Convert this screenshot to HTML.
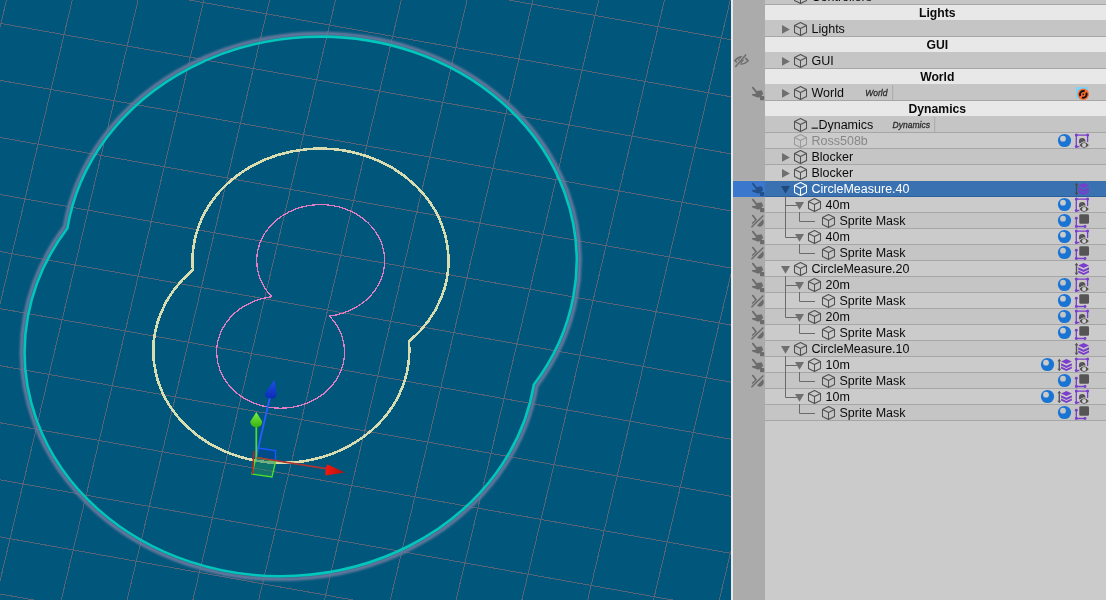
<!DOCTYPE html>
<html><head><meta charset="utf-8"><style>
html,body{margin:0;padding:0;width:1106px;height:600px;overflow:hidden;background:#c8c8c8}
svg{position:absolute;left:0;top:0;display:block}
</style></head><body>
<svg width="1106" height="600" viewBox="0 0 1106 600">
<rect x="0" y="0" width="731" height="600" fill="#00567b"/>
<path d="M0 -205.03L731 -74.40M0 -147.96L731 -17.33M0 -90.89L731 39.74M0 -33.82L731 96.81M0 23.25L731 153.88M0 80.32L731 210.95M0 137.39L731 268.02M0 194.46L731 325.09M0 251.53L731 382.16M0 308.60L731 439.23M0 365.67L731 496.30M0 422.74L731 553.37M0 479.81L731 610.44M0 536.88L731 667.51M0 593.95L731 724.58M0 651.02L731 781.65M-190.90 0L-333.52 600M-125.10 0L-267.72 600M-59.30 0L-201.92 600M6.50 0L-136.12 600M72.30 0L-70.32 600M138.10 0L-4.52 600M203.90 0L61.28 600M269.70 0L127.08 600M335.50 0L192.88 600M401.30 0L258.68 600M467.10 0L324.48 600M532.90 0L390.28 600M598.70 0L456.08 600M664.50 0L521.88 600M730.30 0L587.68 600M796.10 0L653.48 600M861.90 0L719.28 600M927.70 0L785.08 600M993.50 0L850.88 600" stroke="#576377" stroke-width="1" fill="none" shape-rendering="crispEdges"/>
<defs><filter id="blur1" x="-10%" y="-10%" width="120%" height="120%"><feGaussianBlur stdDeviation="0.9"/></filter></defs>
<path d="M64.55 227.00A259.0 227.0 0 1 1 536.75 385.80A259.0 227.0 0 1 1 64.55 227.00Z" fill="none" stroke="#66789c" stroke-width="3.8" filter="url(#blur1)"/>
<path d="M67.39 228.22A256 224 0 1 1 533.91 384.58A256 224 0 1 1 67.39 228.22Z" fill="none" stroke="#00c6bc" stroke-width="2.6"/>
<path d="M192.94 269.87A128 112 0 1 1 408.86 341.63A128 112 0 1 1 192.94 269.87Z" fill="none" stroke="#d8dcae" stroke-width="2.6" shape-rendering="crispEdges"/>
<path d="M271.80 296.73A64 56 0 1 1 329.50 316.07A64 56 0 1 1 271.80 296.73Z" fill="none" stroke="#e47cc2" stroke-width="1.3" shape-rendering="crispEdges"/>
<path d="M256.5 458L257.5 448L275.5 450.5L275.5 460.5Z" fill="#004a8c" opacity="0.9"/>
<path d="M257.5 448L275.5 450.5L275.5 460.5" fill="none" stroke="#1a5aff" stroke-width="1.3"/>
<path d="M256 457.5L275.7 461L272 477L252 474Z" fill="#1f8a60" opacity="0.55"/>
<path d="M256 457.5L275.7 461L272 477L252 474Z" fill="none" stroke="#4ee02a" stroke-width="1.3"/>
<path d="M254 451L252.5 474" stroke="#c02020" stroke-width="1.5"/>
<path d="M256 457.5L326 468.6" stroke="#b03434" stroke-width="1.7"/>
<path d="M256 457.5L270.5 395" stroke="#2a5cff" stroke-width="1.8"/>
<path d="M256.3 457.5L256.3 426" stroke="#48dc40" stroke-width="1.8"/>
<defs><linearGradient id="gcone" x1="0" y1="0" x2="0" y2="1"><stop offset="0" stop-color="#7cf040"/><stop offset="1" stop-color="#38b010"/></linearGradient><linearGradient id="bcone" x1="0" y1="0" x2="0" y2="1"><stop offset="0" stop-color="#2050f0"/><stop offset="1" stop-color="#0a2cb0"/></linearGradient><linearGradient id="rcone" x1="0" y1="0" x2="1" y2="0"><stop offset="0" stop-color="#f01a10"/><stop offset="1" stop-color="#b01010"/></linearGradient></defs>
<path d="M256.3 412L262.2 421.5Q262 427 256.3 427.2Q250.5 427 250.3 421.5Z" fill="url(#gcone)"/>
<path d="M274.4 379.8L276.8 395Q275 399 271 398.6Q265 398 264.5 394.5Z" fill="url(#bcone)"/>
<path d="M344.8 472.4L327.3 464.3Q324.5 469 325.6 475.4Z" fill="url(#rcone)"/>
<rect x="731" y="0" width="2" height="600" fill="#e9e9e9" />
<rect x="733" y="0" width="32" height="600" fill="#ababab" />
<rect x="765" y="0" width="341" height="600" fill="#cbcbcb" />
<rect x="765" y="-12" width="341" height="16" fill="#c5c5c5" />
<path d="M800.5 -9.5L806.5 -6.5L806.5 0.5L800.5 3.5L794.5 0.5L794.5 -6.5ZM794.5 -6.5L800.5 -3.5L806.5 -6.5M800.5 -3.5L800.5 3.5" fill="none" stroke="#505050" stroke-width="1.05" stroke-linejoin="round"/>
<rect x="765" y="4" width="341" height="1" fill="#a6a6a6" />
<rect x="765" y="5" width="341" height="15" fill="#e8e8e8" />
<rect x="765" y="20" width="341" height="16" fill="#c5c5c5" />
<path d="M782 25L789.9 29.4L782 33.8Z" fill="#6f6f6f"/>
<path d="M800.5 22.5L806.5 25.5L806.5 32.5L800.5 35.5L794.5 32.5L794.5 25.5ZM794.5 25.5L800.5 28.5L806.5 25.5M800.5 28.5L800.5 35.5" fill="none" stroke="#505050" stroke-width="1.05" stroke-linejoin="round"/>
<rect x="765" y="36" width="341" height="1" fill="#a6a6a6" />
<rect x="765" y="37" width="341" height="15" fill="#e8e8e8" />
<rect x="765" y="52" width="341" height="16" fill="#c5c5c5" />
<path d="M782 57L789.9 61.4L782 65.8Z" fill="#6f6f6f"/>
<path d="M800.5 54.5L806.5 57.5L806.5 64.5L800.5 67.5L794.5 64.5L794.5 57.5ZM794.5 57.5L800.5 60.5L806.5 57.5M800.5 60.5L800.5 67.5" fill="none" stroke="#505050" stroke-width="1.05" stroke-linejoin="round"/>
<path d="M734.8 60.7Q741.5 53.0 748.2 60.7Q741.5 67.4 734.8 60.7Z" fill="none" stroke="#6e6e6e" stroke-width="1.5"/>
<path d="M737.7 60.7Q739.5 56.2 744.1 57.6L739.1 64.0Q737.7 62.7 737.7 60.7Z" fill="#6e6e6e"/>
<path d="M735.7 66.4L745.7 54.900000000000006" stroke="#ababab" stroke-width="3.2"/>
<path d="M735.7 66.4L745.7 54.900000000000006" stroke="#6e6e6e" stroke-width="1.5" stroke-linecap="round"/>
<path d="M741.0 62.400000000000006L743.1 60.2" stroke="#6e6e6e" stroke-width="1.3" stroke-linecap="round"/>
<rect x="765" y="68" width="341" height="1" fill="#a6a6a6" />
<rect x="765" y="69" width="341" height="15" fill="#e8e8e8" />
<rect x="765" y="84" width="341" height="16" fill="#c5c5c5" />
<path d="M782 89L789.9 93.4L782 97.8Z" fill="#6f6f6f"/>
<path d="M800.5 86.5L806.5 89.5L806.5 96.5L800.5 99.5L794.5 96.5L794.5 89.5ZM794.5 89.5L800.5 92.5L806.5 89.5M800.5 92.5L800.5 99.5" fill="none" stroke="#505050" stroke-width="1.05" stroke-linejoin="round"/>
<rect x="892.2" y="85" width="1" height="15" fill="#aaaaaa"/>
<rect x="1076" y="87" width="12" height="11.5" fill="#7dd3f7" rx="1"/>
<circle cx="1083.3" cy="94.3" r="5.7" fill="#ff6b2c"/>
<path d="M1080.44 95.95A3.3 3.3 0 0 1 1084.69 91.31" stroke="#141414" stroke-width="1.9" fill="none"/>
<path d="M1086.16 92.65A3.3 3.3 0 0 1 1081.91 97.29" stroke="#141414" stroke-width="1.9" fill="none"/>
<circle cx="1083.3" cy="94.3" r="0.9" fill="#3a1a0a"/>
<path d="M752.8 87.6L756.6 92.4" stroke="#6b6b6b" stroke-width="1.7" stroke-linecap="round"/>
<path d="M755.4 91.2L761.6 90.2L763.2 93.6L761 96.4L758.4 97.8L752.2 95.4L752.2 94L756 93.8Z" fill="#6b6b6b"/>
<rect x="760" y="96" width="4.2" height="4.2" rx="0.8" fill="#6b6b6b"/>
<rect x="765" y="100" width="341" height="1" fill="#a6a6a6" />
<rect x="765" y="101" width="341" height="15" fill="#e8e8e8" />
<rect x="765" y="116" width="341" height="16" fill="#c5c5c5" />
<path d="M800.5 118.5L806.5 121.5L806.5 128.5L800.5 131.5L794.5 128.5L794.5 121.5ZM794.5 121.5L800.5 124.5L806.5 121.5M800.5 124.5L800.5 131.5" fill="none" stroke="#505050" stroke-width="1.05" stroke-linejoin="round"/>
<rect x="811.6" y="127.6" width="6.4" height="1.1" fill="#0b0b0b" />
<rect x="934.2" y="117" width="1" height="15" fill="#aaaaaa"/>
<rect x="765" y="132" width="341" height="16" fill="#cbcbcb" />
<rect x="765" y="132" width="341" height="1" fill="#a6a6a6" />
<path d="M800.5 134.5L806.5 137.5L806.5 144.5L800.5 147.5L794.5 144.5L794.5 137.5ZM794.5 137.5L800.5 140.5L806.5 137.5M800.5 140.5L800.5 147.5" fill="none" stroke="#9a9a9a" stroke-width="1.05" stroke-linejoin="round"/>
<circle cx="1064.5" cy="140.5" r="6.6" fill="#1a74d4"/><circle cx="1063.0" cy="138.7" r="2.9" fill="#cbcbcb"/>
<path d="M1076.3 146.6L1076.3 135.1L1087.6 135.1L1087.6 142M1076.3 146.6L1079.5 146.6" stroke="#7a3dcc" stroke-width="1.3" fill="none"/>
<circle cx="1076.3" cy="135.1" r="1.5" fill="#7a3dcc"/>
<circle cx="1087.6" cy="135.1" r="1.5" fill="#7a3dcc"/>
<circle cx="1076.3" cy="146.6" r="1.5" fill="#7a3dcc"/>
<path d="M1079.0 143.3L1079.0 141.3A3.2 3.2 0 0 1 1085.4 141.3L1085.4 143.3Z" fill="#555555"/>
<path d="M1078.8 145.1Q1084.1 138.5 1089.3999999999999 145.1Q1084.1 151.7 1078.8 145.1Z" fill="#555555" stroke="#cbcbcb" stroke-width="0.9"/>
<circle cx="1084.1" cy="145.1" r="2.1" fill="#cdcdcd"/>
<rect x="765" y="148" width="341" height="16" fill="#c5c5c5" />
<rect x="765" y="148" width="341" height="1" fill="#a6a6a6" />
<path d="M782 153L789.9 157.4L782 161.8Z" fill="#6f6f6f"/>
<path d="M800.5 150.5L806.5 153.5L806.5 160.5L800.5 163.5L794.5 160.5L794.5 153.5ZM794.5 153.5L800.5 156.5L806.5 153.5M800.5 156.5L800.5 163.5" fill="none" stroke="#505050" stroke-width="1.05" stroke-linejoin="round"/>
<rect x="765" y="164" width="341" height="16" fill="#cbcbcb" />
<rect x="765" y="164" width="341" height="1" fill="#a6a6a6" />
<path d="M782 169L789.9 173.4L782 177.8Z" fill="#6f6f6f"/>
<path d="M800.5 166.5L806.5 169.5L806.5 176.5L800.5 179.5L794.5 176.5L794.5 169.5ZM794.5 169.5L800.5 172.5L806.5 169.5M800.5 172.5L800.5 179.5" fill="none" stroke="#505050" stroke-width="1.05" stroke-linejoin="round"/>
<rect x="765" y="180" width="341" height="16" fill="#c5c5c5" />
<rect x="765" y="180" width="341" height="1" fill="#a6a6a6" />
<rect x="765" y="180" width="341" height="1" fill="#cfcabf" />
<rect x="733" y="180" width="32" height="1" fill="#b5b1a8" />
<rect x="765" y="181" width="341" height="16" fill="#3a72b1" />
<rect x="733" y="181" width="32" height="16" fill="#3b77cc" />
<rect x="765" y="196" width="341" height="1" fill="#2d5f9a" />
<path d="M781.0 186L790.0 186L785.5 193.8Z" fill="#1f4a7d"/>
<path d="M800.5 182.5L806.5 185.5L806.5 192.5L800.5 195.5L794.5 192.5L794.5 185.5ZM794.5 185.5L800.5 188.5L806.5 185.5M800.5 188.5L800.5 195.5" fill="none" stroke="#ffffff" stroke-width="1.05" stroke-linejoin="round"/>
<path d="M1076.5 184L1076.5 194" stroke="#4a4a4a" stroke-width="1.4"/>
<path d="M1074.6 185.2L1076.5 182.8L1078.4 185.2ZM1074.6 192.8L1076.5 195.2L1078.4 192.8Z" fill="#4a4a4a"/>
<path d="M1078.2 185.5L1083.6 182.9L1089.0 185.5L1083.6 188.1Z" fill="#7a3dcc"/>
<path d="M1078.2 187.3L1083.6 189.8L1089.0 187.3L1089.0 189.4L1083.6 191.9L1078.2 189.4Z" fill="#7a3dcc"/>
<path d="M1078.2 190.5L1083.6 193L1089.0 190.5L1089.0 192.6L1083.6 195.1L1078.2 192.6Z" fill="#7a3dcc"/>
<path d="M752.8 183.6L756.6 188.4" stroke="#23508a" stroke-width="1.7" stroke-linecap="round"/>
<path d="M755.4 187.2L761.6 186.2L763.2 189.6L761 192.4L758.4 193.8L752.2 191.4L752.2 190L756 189.8Z" fill="#23508a"/>
<rect x="760" y="192" width="4.2" height="4.2" rx="0.8" fill="#23508a"/>
<rect x="765" y="197" width="341" height="15" fill="#cbcbcb" />
<path d="M795.0 202L804.0 202L799.5 209.8Z" fill="#6f6f6f"/>
<path d="M814.5 198.5L820.5 201.5L820.5 208.5L814.5 211.5L808.5 208.5L808.5 201.5ZM808.5 201.5L814.5 204.5L820.5 201.5M814.5 204.5L814.5 211.5" fill="none" stroke="#505050" stroke-width="1.05" stroke-linejoin="round"/>
<circle cx="1064.5" cy="204.5" r="6.6" fill="#1a74d4"/><circle cx="1063.0" cy="202.7" r="2.9" fill="#cbcbcb"/>
<path d="M1076.3 210.6L1076.3 199.1L1087.6 199.1L1087.6 206M1076.3 210.6L1079.5 210.6" stroke="#7a3dcc" stroke-width="1.3" fill="none"/>
<circle cx="1076.3" cy="199.1" r="1.5" fill="#7a3dcc"/>
<circle cx="1087.6" cy="199.1" r="1.5" fill="#7a3dcc"/>
<circle cx="1076.3" cy="210.6" r="1.5" fill="#7a3dcc"/>
<path d="M1079.0 207.3L1079.0 205.3A3.2 3.2 0 0 1 1085.4 205.3L1085.4 207.3Z" fill="#555555"/>
<path d="M1078.8 209.1Q1084.1 202.5 1089.3999999999999 209.1Q1084.1 215.7 1078.8 209.1Z" fill="#555555" stroke="#cbcbcb" stroke-width="0.9"/>
<circle cx="1084.1" cy="209.1" r="2.1" fill="#cdcdcd"/>
<path d="M752.8 199.6L756.6 204.4" stroke="#6b6b6b" stroke-width="1.7" stroke-linecap="round"/>
<path d="M755.4 203.2L761.6 202.2L763.2 205.6L761 208.4L758.4 209.8L752.2 207.4L752.2 206L756 205.8Z" fill="#6b6b6b"/>
<rect x="760" y="208" width="4.2" height="4.2" rx="0.8" fill="#6b6b6b"/>
<rect x="765" y="212" width="341" height="16" fill="#c5c5c5" />
<rect x="765" y="212" width="341" height="1" fill="#a6a6a6" />
<path d="M828.5 214.5L834.5 217.5L834.5 224.5L828.5 227.5L822.5 224.5L822.5 217.5ZM822.5 217.5L828.5 220.5L834.5 217.5M828.5 220.5L828.5 227.5" fill="none" stroke="#505050" stroke-width="1.05" stroke-linejoin="round"/>
<circle cx="1064.5" cy="220.5" r="6.6" fill="#1a74d4"/><circle cx="1063.0" cy="218.7" r="2.9" fill="#c5c5c5"/>
<path d="M1076.3 218.3L1076.3 226.5L1085.0 226.5" stroke="#7a3dcc" stroke-width="1.3" fill="none"/>
<circle cx="1076.3" cy="218.3" r="1.45" fill="#7a3dcc"/>
<circle cx="1085.0" cy="226.5" r="1.45" fill="#7a3dcc"/>
<circle cx="1076.3" cy="226.5" r="1.45" fill="#7a3dcc"/>
<rect x="1079.3" y="214.3" width="9.7" height="9.4" rx="1.3" fill="#555555"/>
<path d="M752.8 215.6L756.6 220.6" stroke="#6b6b6b" stroke-width="1.7" stroke-linecap="round"/>
<path d="M755.4 219.8L757 221.4L752.2 224.8L752.2 222.6Z" fill="#6b6b6b"/>
<path d="M757 225.6L763 219Q765 223.8 761.6 226.2Q759 227.4 757 225.6Z" fill="#6b6b6b"/>
<path d="M751.4 227.2L763.4 215.4" stroke="#ababab" stroke-width="2.6"/>
<path d="M751.4 227.2L763.4 215.4" stroke="#6b6b6b" stroke-width="1.4"/>
<rect x="765" y="228" width="341" height="16" fill="#cbcbcb" />
<rect x="765" y="228" width="341" height="1" fill="#a6a6a6" />
<path d="M795.0 234L804.0 234L799.5 241.8Z" fill="#6f6f6f"/>
<path d="M814.5 230.5L820.5 233.5L820.5 240.5L814.5 243.5L808.5 240.5L808.5 233.5ZM808.5 233.5L814.5 236.5L820.5 233.5M814.5 236.5L814.5 243.5" fill="none" stroke="#505050" stroke-width="1.05" stroke-linejoin="round"/>
<circle cx="1064.5" cy="236.5" r="6.6" fill="#1a74d4"/><circle cx="1063.0" cy="234.7" r="2.9" fill="#cbcbcb"/>
<path d="M1076.3 242.6L1076.3 231.1L1087.6 231.1L1087.6 238M1076.3 242.6L1079.5 242.6" stroke="#7a3dcc" stroke-width="1.3" fill="none"/>
<circle cx="1076.3" cy="231.1" r="1.5" fill="#7a3dcc"/>
<circle cx="1087.6" cy="231.1" r="1.5" fill="#7a3dcc"/>
<circle cx="1076.3" cy="242.6" r="1.5" fill="#7a3dcc"/>
<path d="M1079.0 239.3L1079.0 237.3A3.2 3.2 0 0 1 1085.4 237.3L1085.4 239.3Z" fill="#555555"/>
<path d="M1078.8 241.1Q1084.1 234.5 1089.3999999999999 241.1Q1084.1 247.7 1078.8 241.1Z" fill="#555555" stroke="#cbcbcb" stroke-width="0.9"/>
<circle cx="1084.1" cy="241.1" r="2.1" fill="#cdcdcd"/>
<path d="M752.8 231.6L756.6 236.4" stroke="#6b6b6b" stroke-width="1.7" stroke-linecap="round"/>
<path d="M755.4 235.2L761.6 234.2L763.2 237.6L761 240.4L758.4 241.8L752.2 239.4L752.2 238L756 237.8Z" fill="#6b6b6b"/>
<rect x="760" y="240" width="4.2" height="4.2" rx="0.8" fill="#6b6b6b"/>
<rect x="765" y="244" width="341" height="16" fill="#c5c5c5" />
<rect x="765" y="244" width="341" height="1" fill="#a6a6a6" />
<path d="M828.5 246.5L834.5 249.5L834.5 256.5L828.5 259.5L822.5 256.5L822.5 249.5ZM822.5 249.5L828.5 252.5L834.5 249.5M828.5 252.5L828.5 259.5" fill="none" stroke="#505050" stroke-width="1.05" stroke-linejoin="round"/>
<circle cx="1064.5" cy="252.5" r="6.6" fill="#1a74d4"/><circle cx="1063.0" cy="250.7" r="2.9" fill="#c5c5c5"/>
<path d="M1076.3 250.3L1076.3 258.5L1085.0 258.5" stroke="#7a3dcc" stroke-width="1.3" fill="none"/>
<circle cx="1076.3" cy="250.3" r="1.45" fill="#7a3dcc"/>
<circle cx="1085.0" cy="258.5" r="1.45" fill="#7a3dcc"/>
<circle cx="1076.3" cy="258.5" r="1.45" fill="#7a3dcc"/>
<rect x="1079.3" y="246.3" width="9.7" height="9.4" rx="1.3" fill="#555555"/>
<path d="M752.8 247.6L756.6 252.6" stroke="#6b6b6b" stroke-width="1.7" stroke-linecap="round"/>
<path d="M755.4 251.8L757 253.4L752.2 256.8L752.2 254.6Z" fill="#6b6b6b"/>
<path d="M757 257.6L763 251Q765 255.8 761.6 258.2Q759 259.4 757 257.6Z" fill="#6b6b6b"/>
<path d="M751.4 259.2L763.4 247.4" stroke="#ababab" stroke-width="2.6"/>
<path d="M751.4 259.2L763.4 247.4" stroke="#6b6b6b" stroke-width="1.4"/>
<rect x="765" y="260" width="341" height="16" fill="#cbcbcb" />
<rect x="765" y="260" width="341" height="1" fill="#a6a6a6" />
<path d="M781.0 266L790.0 266L785.5 273.8Z" fill="#6f6f6f"/>
<path d="M800.5 262.5L806.5 265.5L806.5 272.5L800.5 275.5L794.5 272.5L794.5 265.5ZM794.5 265.5L800.5 268.5L806.5 265.5M800.5 268.5L800.5 275.5" fill="none" stroke="#505050" stroke-width="1.05" stroke-linejoin="round"/>
<path d="M1076.5 264L1076.5 274" stroke="#555" stroke-width="1.4"/>
<path d="M1074.6 265.2L1076.5 262.8L1078.4 265.2ZM1074.6 272.8L1076.5 275.2L1078.4 272.8Z" fill="#555"/>
<path d="M1078.2 265.5L1083.6 262.9L1089.0 265.5L1083.6 268.1Z" fill="#7a3dcc"/>
<path d="M1078.2 267.3L1083.6 269.8L1089.0 267.3L1089.0 269.4L1083.6 271.9L1078.2 269.4Z" fill="#7a3dcc"/>
<path d="M1078.2 270.5L1083.6 273L1089.0 270.5L1089.0 272.6L1083.6 275.1L1078.2 272.6Z" fill="#7a3dcc"/>
<path d="M752.8 263.6L756.6 268.4" stroke="#6b6b6b" stroke-width="1.7" stroke-linecap="round"/>
<path d="M755.4 267.2L761.6 266.2L763.2 269.6L761 272.4L758.4 273.8L752.2 271.4L752.2 270L756 269.8Z" fill="#6b6b6b"/>
<rect x="760" y="272" width="4.2" height="4.2" rx="0.8" fill="#6b6b6b"/>
<rect x="765" y="276" width="341" height="16" fill="#c5c5c5" />
<rect x="765" y="276" width="341" height="1" fill="#a6a6a6" />
<path d="M795.0 282L804.0 282L799.5 289.8Z" fill="#6f6f6f"/>
<path d="M814.5 278.5L820.5 281.5L820.5 288.5L814.5 291.5L808.5 288.5L808.5 281.5ZM808.5 281.5L814.5 284.5L820.5 281.5M814.5 284.5L814.5 291.5" fill="none" stroke="#505050" stroke-width="1.05" stroke-linejoin="round"/>
<circle cx="1064.5" cy="284.5" r="6.6" fill="#1a74d4"/><circle cx="1063.0" cy="282.7" r="2.9" fill="#c5c5c5"/>
<path d="M1076.3 290.6L1076.3 279.1L1087.6 279.1L1087.6 286M1076.3 290.6L1079.5 290.6" stroke="#7a3dcc" stroke-width="1.3" fill="none"/>
<circle cx="1076.3" cy="279.1" r="1.5" fill="#7a3dcc"/>
<circle cx="1087.6" cy="279.1" r="1.5" fill="#7a3dcc"/>
<circle cx="1076.3" cy="290.6" r="1.5" fill="#7a3dcc"/>
<path d="M1079.0 287.3L1079.0 285.3A3.2 3.2 0 0 1 1085.4 285.3L1085.4 287.3Z" fill="#555555"/>
<path d="M1078.8 289.1Q1084.1 282.5 1089.3999999999999 289.1Q1084.1 295.70000000000005 1078.8 289.1Z" fill="#555555" stroke="#c5c5c5" stroke-width="0.9"/>
<circle cx="1084.1" cy="289.1" r="2.1" fill="#cdcdcd"/>
<path d="M752.8 279.6L756.6 284.4" stroke="#6b6b6b" stroke-width="1.7" stroke-linecap="round"/>
<path d="M755.4 283.2L761.6 282.2L763.2 285.6L761 288.4L758.4 289.8L752.2 287.4L752.2 286L756 285.8Z" fill="#6b6b6b"/>
<rect x="760" y="288" width="4.2" height="4.2" rx="0.8" fill="#6b6b6b"/>
<rect x="765" y="292" width="341" height="16" fill="#cbcbcb" />
<rect x="765" y="292" width="341" height="1" fill="#a6a6a6" />
<path d="M828.5 294.5L834.5 297.5L834.5 304.5L828.5 307.5L822.5 304.5L822.5 297.5ZM822.5 297.5L828.5 300.5L834.5 297.5M828.5 300.5L828.5 307.5" fill="none" stroke="#505050" stroke-width="1.05" stroke-linejoin="round"/>
<circle cx="1064.5" cy="300.5" r="6.6" fill="#1a74d4"/><circle cx="1063.0" cy="298.7" r="2.9" fill="#cbcbcb"/>
<path d="M1076.3 298.3L1076.3 306.5L1085.0 306.5" stroke="#7a3dcc" stroke-width="1.3" fill="none"/>
<circle cx="1076.3" cy="298.3" r="1.45" fill="#7a3dcc"/>
<circle cx="1085.0" cy="306.5" r="1.45" fill="#7a3dcc"/>
<circle cx="1076.3" cy="306.5" r="1.45" fill="#7a3dcc"/>
<rect x="1079.3" y="294.3" width="9.7" height="9.4" rx="1.3" fill="#555555"/>
<path d="M752.8 295.6L756.6 300.6" stroke="#6b6b6b" stroke-width="1.7" stroke-linecap="round"/>
<path d="M755.4 299.8L757 301.4L752.2 304.8L752.2 302.6Z" fill="#6b6b6b"/>
<path d="M757 305.6L763 299Q765 303.8 761.6 306.2Q759 307.4 757 305.6Z" fill="#6b6b6b"/>
<path d="M751.4 307.2L763.4 295.4" stroke="#ababab" stroke-width="2.6"/>
<path d="M751.4 307.2L763.4 295.4" stroke="#6b6b6b" stroke-width="1.4"/>
<rect x="765" y="308" width="341" height="16" fill="#c5c5c5" />
<rect x="765" y="308" width="341" height="1" fill="#a6a6a6" />
<path d="M795.0 314L804.0 314L799.5 321.8Z" fill="#6f6f6f"/>
<path d="M814.5 310.5L820.5 313.5L820.5 320.5L814.5 323.5L808.5 320.5L808.5 313.5ZM808.5 313.5L814.5 316.5L820.5 313.5M814.5 316.5L814.5 323.5" fill="none" stroke="#505050" stroke-width="1.05" stroke-linejoin="round"/>
<circle cx="1064.5" cy="316.5" r="6.6" fill="#1a74d4"/><circle cx="1063.0" cy="314.7" r="2.9" fill="#c5c5c5"/>
<path d="M1076.3 322.6L1076.3 311.1L1087.6 311.1L1087.6 318M1076.3 322.6L1079.5 322.6" stroke="#7a3dcc" stroke-width="1.3" fill="none"/>
<circle cx="1076.3" cy="311.1" r="1.5" fill="#7a3dcc"/>
<circle cx="1087.6" cy="311.1" r="1.5" fill="#7a3dcc"/>
<circle cx="1076.3" cy="322.6" r="1.5" fill="#7a3dcc"/>
<path d="M1079.0 319.3L1079.0 317.3A3.2 3.2 0 0 1 1085.4 317.3L1085.4 319.3Z" fill="#555555"/>
<path d="M1078.8 321.1Q1084.1 314.5 1089.3999999999999 321.1Q1084.1 327.70000000000005 1078.8 321.1Z" fill="#555555" stroke="#c5c5c5" stroke-width="0.9"/>
<circle cx="1084.1" cy="321.1" r="2.1" fill="#cdcdcd"/>
<path d="M752.8 311.6L756.6 316.4" stroke="#6b6b6b" stroke-width="1.7" stroke-linecap="round"/>
<path d="M755.4 315.2L761.6 314.2L763.2 317.6L761 320.4L758.4 321.8L752.2 319.4L752.2 318L756 317.8Z" fill="#6b6b6b"/>
<rect x="760" y="320" width="4.2" height="4.2" rx="0.8" fill="#6b6b6b"/>
<rect x="765" y="324" width="341" height="16" fill="#cbcbcb" />
<rect x="765" y="324" width="341" height="1" fill="#a6a6a6" />
<path d="M828.5 326.5L834.5 329.5L834.5 336.5L828.5 339.5L822.5 336.5L822.5 329.5ZM822.5 329.5L828.5 332.5L834.5 329.5M828.5 332.5L828.5 339.5" fill="none" stroke="#505050" stroke-width="1.05" stroke-linejoin="round"/>
<circle cx="1064.5" cy="332.5" r="6.6" fill="#1a74d4"/><circle cx="1063.0" cy="330.7" r="2.9" fill="#cbcbcb"/>
<path d="M1076.3 330.3L1076.3 338.5L1085.0 338.5" stroke="#7a3dcc" stroke-width="1.3" fill="none"/>
<circle cx="1076.3" cy="330.3" r="1.45" fill="#7a3dcc"/>
<circle cx="1085.0" cy="338.5" r="1.45" fill="#7a3dcc"/>
<circle cx="1076.3" cy="338.5" r="1.45" fill="#7a3dcc"/>
<rect x="1079.3" y="326.3" width="9.7" height="9.4" rx="1.3" fill="#555555"/>
<path d="M752.8 327.6L756.6 332.6" stroke="#6b6b6b" stroke-width="1.7" stroke-linecap="round"/>
<path d="M755.4 331.8L757 333.4L752.2 336.8L752.2 334.6Z" fill="#6b6b6b"/>
<path d="M757 337.6L763 331Q765 335.8 761.6 338.2Q759 339.4 757 337.6Z" fill="#6b6b6b"/>
<path d="M751.4 339.2L763.4 327.4" stroke="#ababab" stroke-width="2.6"/>
<path d="M751.4 339.2L763.4 327.4" stroke="#6b6b6b" stroke-width="1.4"/>
<rect x="765" y="340" width="341" height="16" fill="#c5c5c5" />
<rect x="765" y="340" width="341" height="1" fill="#a6a6a6" />
<path d="M781.0 346L790.0 346L785.5 353.8Z" fill="#6f6f6f"/>
<path d="M800.5 342.5L806.5 345.5L806.5 352.5L800.5 355.5L794.5 352.5L794.5 345.5ZM794.5 345.5L800.5 348.5L806.5 345.5M800.5 348.5L800.5 355.5" fill="none" stroke="#505050" stroke-width="1.05" stroke-linejoin="round"/>
<path d="M1076.5 344L1076.5 354" stroke="#555" stroke-width="1.4"/>
<path d="M1074.6 345.2L1076.5 342.8L1078.4 345.2ZM1074.6 352.8L1076.5 355.2L1078.4 352.8Z" fill="#555"/>
<path d="M1078.2 345.5L1083.6 342.9L1089.0 345.5L1083.6 348.1Z" fill="#7a3dcc"/>
<path d="M1078.2 347.3L1083.6 349.8L1089.0 347.3L1089.0 349.4L1083.6 351.9L1078.2 349.4Z" fill="#7a3dcc"/>
<path d="M1078.2 350.5L1083.6 353L1089.0 350.5L1089.0 352.6L1083.6 355.1L1078.2 352.6Z" fill="#7a3dcc"/>
<path d="M752.8 343.6L756.6 348.4" stroke="#6b6b6b" stroke-width="1.7" stroke-linecap="round"/>
<path d="M755.4 347.2L761.6 346.2L763.2 349.6L761 352.4L758.4 353.8L752.2 351.4L752.2 350L756 349.8Z" fill="#6b6b6b"/>
<rect x="760" y="352" width="4.2" height="4.2" rx="0.8" fill="#6b6b6b"/>
<rect x="765" y="356" width="341" height="16" fill="#cbcbcb" />
<rect x="765" y="356" width="341" height="1" fill="#a6a6a6" />
<path d="M795.0 362L804.0 362L799.5 369.8Z" fill="#6f6f6f"/>
<path d="M814.5 358.5L820.5 361.5L820.5 368.5L814.5 371.5L808.5 368.5L808.5 361.5ZM808.5 361.5L814.5 364.5L820.5 361.5M814.5 364.5L814.5 371.5" fill="none" stroke="#505050" stroke-width="1.05" stroke-linejoin="round"/>
<circle cx="1047.5" cy="364.5" r="6.6" fill="#1a74d4"/><circle cx="1046.0" cy="362.7" r="2.9" fill="#cbcbcb"/>
<path d="M1059.3 360L1059.3 370" stroke="#555" stroke-width="1.4"/>
<path d="M1057.3999999999999 361.2L1059.3 358.8L1061.2 361.2ZM1057.3999999999999 368.8L1059.3 371.2L1061.2 368.8Z" fill="#555"/>
<path d="M1061.0 361.5L1066.4 358.9L1071.8 361.5L1066.4 364.1Z" fill="#7a3dcc"/>
<path d="M1061.0 363.3L1066.4 365.8L1071.8 363.3L1071.8 365.4L1066.4 367.9L1061.0 365.4Z" fill="#7a3dcc"/>
<path d="M1061.0 366.5L1066.4 369L1071.8 366.5L1071.8 368.6L1066.4 371.1L1061.0 368.6Z" fill="#7a3dcc"/>
<path d="M1076.3 370.6L1076.3 359.1L1087.6 359.1L1087.6 366M1076.3 370.6L1079.5 370.6" stroke="#7a3dcc" stroke-width="1.3" fill="none"/>
<circle cx="1076.3" cy="359.1" r="1.5" fill="#7a3dcc"/>
<circle cx="1087.6" cy="359.1" r="1.5" fill="#7a3dcc"/>
<circle cx="1076.3" cy="370.6" r="1.5" fill="#7a3dcc"/>
<path d="M1079.0 367.3L1079.0 365.3A3.2 3.2 0 0 1 1085.4 365.3L1085.4 367.3Z" fill="#555555"/>
<path d="M1078.8 369.1Q1084.1 362.5 1089.3999999999999 369.1Q1084.1 375.70000000000005 1078.8 369.1Z" fill="#555555" stroke="#cbcbcb" stroke-width="0.9"/>
<circle cx="1084.1" cy="369.1" r="2.1" fill="#cdcdcd"/>
<path d="M752.8 359.6L756.6 364.4" stroke="#6b6b6b" stroke-width="1.7" stroke-linecap="round"/>
<path d="M755.4 363.2L761.6 362.2L763.2 365.6L761 368.4L758.4 369.8L752.2 367.4L752.2 366L756 365.8Z" fill="#6b6b6b"/>
<rect x="760" y="368" width="4.2" height="4.2" rx="0.8" fill="#6b6b6b"/>
<rect x="765" y="372" width="341" height="16" fill="#c5c5c5" />
<rect x="765" y="372" width="341" height="1" fill="#a6a6a6" />
<path d="M828.5 374.5L834.5 377.5L834.5 384.5L828.5 387.5L822.5 384.5L822.5 377.5ZM822.5 377.5L828.5 380.5L834.5 377.5M828.5 380.5L828.5 387.5" fill="none" stroke="#505050" stroke-width="1.05" stroke-linejoin="round"/>
<circle cx="1064.5" cy="380.5" r="6.6" fill="#1a74d4"/><circle cx="1063.0" cy="378.7" r="2.9" fill="#c5c5c5"/>
<path d="M1076.3 378.3L1076.3 386.5L1085.0 386.5" stroke="#7a3dcc" stroke-width="1.3" fill="none"/>
<circle cx="1076.3" cy="378.3" r="1.45" fill="#7a3dcc"/>
<circle cx="1085.0" cy="386.5" r="1.45" fill="#7a3dcc"/>
<circle cx="1076.3" cy="386.5" r="1.45" fill="#7a3dcc"/>
<rect x="1079.3" y="374.3" width="9.7" height="9.4" rx="1.3" fill="#555555"/>
<path d="M752.8 375.6L756.6 380.6" stroke="#6b6b6b" stroke-width="1.7" stroke-linecap="round"/>
<path d="M755.4 379.8L757 381.4L752.2 384.8L752.2 382.6Z" fill="#6b6b6b"/>
<path d="M757 385.6L763 379Q765 383.8 761.6 386.2Q759 387.4 757 385.6Z" fill="#6b6b6b"/>
<path d="M751.4 387.2L763.4 375.4" stroke="#ababab" stroke-width="2.6"/>
<path d="M751.4 387.2L763.4 375.4" stroke="#6b6b6b" stroke-width="1.4"/>
<rect x="765" y="388" width="341" height="16" fill="#cbcbcb" />
<rect x="765" y="388" width="341" height="1" fill="#a6a6a6" />
<path d="M795.0 394L804.0 394L799.5 401.8Z" fill="#6f6f6f"/>
<path d="M814.5 390.5L820.5 393.5L820.5 400.5L814.5 403.5L808.5 400.5L808.5 393.5ZM808.5 393.5L814.5 396.5L820.5 393.5M814.5 396.5L814.5 403.5" fill="none" stroke="#505050" stroke-width="1.05" stroke-linejoin="round"/>
<circle cx="1047.5" cy="396.5" r="6.6" fill="#1a74d4"/><circle cx="1046.0" cy="394.7" r="2.9" fill="#cbcbcb"/>
<path d="M1059.3 392L1059.3 402" stroke="#555" stroke-width="1.4"/>
<path d="M1057.3999999999999 393.2L1059.3 390.8L1061.2 393.2ZM1057.3999999999999 400.8L1059.3 403.2L1061.2 400.8Z" fill="#555"/>
<path d="M1061.0 393.5L1066.4 390.9L1071.8 393.5L1066.4 396.1Z" fill="#7a3dcc"/>
<path d="M1061.0 395.3L1066.4 397.8L1071.8 395.3L1071.8 397.4L1066.4 399.9L1061.0 397.4Z" fill="#7a3dcc"/>
<path d="M1061.0 398.5L1066.4 401L1071.8 398.5L1071.8 400.6L1066.4 403.1L1061.0 400.6Z" fill="#7a3dcc"/>
<path d="M1076.3 402.6L1076.3 391.1L1087.6 391.1L1087.6 398M1076.3 402.6L1079.5 402.6" stroke="#7a3dcc" stroke-width="1.3" fill="none"/>
<circle cx="1076.3" cy="391.1" r="1.5" fill="#7a3dcc"/>
<circle cx="1087.6" cy="391.1" r="1.5" fill="#7a3dcc"/>
<circle cx="1076.3" cy="402.6" r="1.5" fill="#7a3dcc"/>
<path d="M1079.0 399.3L1079.0 397.3A3.2 3.2 0 0 1 1085.4 397.3L1085.4 399.3Z" fill="#555555"/>
<path d="M1078.8 401.1Q1084.1 394.5 1089.3999999999999 401.1Q1084.1 407.70000000000005 1078.8 401.1Z" fill="#555555" stroke="#cbcbcb" stroke-width="0.9"/>
<circle cx="1084.1" cy="401.1" r="2.1" fill="#cdcdcd"/>
<rect x="765" y="404" width="341" height="16" fill="#c5c5c5" />
<rect x="765" y="404" width="341" height="1" fill="#a6a6a6" />
<rect x="765" y="420" width="341" height="1" fill="#a6a6a6" />
<path d="M828.5 406.5L834.5 409.5L834.5 416.5L828.5 419.5L822.5 416.5L822.5 409.5ZM822.5 409.5L828.5 412.5L834.5 409.5M828.5 412.5L828.5 419.5" fill="none" stroke="#505050" stroke-width="1.05" stroke-linejoin="round"/>
<circle cx="1064.5" cy="412.5" r="6.6" fill="#1a74d4"/><circle cx="1063.0" cy="410.7" r="2.9" fill="#c5c5c5"/>
<path d="M1076.3 410.3L1076.3 418.5L1085.0 418.5" stroke="#7a3dcc" stroke-width="1.3" fill="none"/>
<circle cx="1076.3" cy="410.3" r="1.45" fill="#7a3dcc"/>
<circle cx="1085.0" cy="418.5" r="1.45" fill="#7a3dcc"/>
<circle cx="1076.3" cy="418.5" r="1.45" fill="#7a3dcc"/>
<rect x="1079.3" y="406.3" width="9.7" height="9.4" rx="1.3" fill="#555555"/>
<path d="M785.5 196L785.5 237.5" stroke="#6a6a6a" stroke-width="1" fill="none"/>
<path d="M785.5 205.5L797 205.5" stroke="#6a6a6a" stroke-width="1" fill="none"/>
<path d="M799.5 212L799.5 221.5L815 221.5" stroke="#6a6a6a" stroke-width="1" fill="none"/>
<path d="M785.5 237.5L797 237.5" stroke="#6a6a6a" stroke-width="1" fill="none"/>
<path d="M799.5 244L799.5 253.5L815 253.5" stroke="#6a6a6a" stroke-width="1" fill="none"/>
<path d="M785.5 276L785.5 317.5" stroke="#6a6a6a" stroke-width="1" fill="none"/>
<path d="M785.5 285.5L797 285.5" stroke="#6a6a6a" stroke-width="1" fill="none"/>
<path d="M799.5 292L799.5 301.5L815 301.5" stroke="#6a6a6a" stroke-width="1" fill="none"/>
<path d="M785.5 317.5L797 317.5" stroke="#6a6a6a" stroke-width="1" fill="none"/>
<path d="M799.5 324L799.5 333.5L815 333.5" stroke="#6a6a6a" stroke-width="1" fill="none"/>
<path d="M785.5 356L785.5 397.5" stroke="#6a6a6a" stroke-width="1" fill="none"/>
<path d="M785.5 365.5L797 365.5" stroke="#6a6a6a" stroke-width="1" fill="none"/>
<path d="M799.5 372L799.5 381.5L815 381.5" stroke="#6a6a6a" stroke-width="1" fill="none"/>
<path d="M785.5 397.5L797 397.5" stroke="#6a6a6a" stroke-width="1" fill="none"/>
<path d="M799.5 404L799.5 413.5L815 413.5" stroke="#6a6a6a" stroke-width="1" fill="none"/>
<g style="will-change:transform"><text x="811.5" y="0.8" font-family='"Liberation Sans", sans-serif' font-size="12.5" fill="#0b0b0b">Controllers</text>
<text x="937.3" y="16.8" text-anchor="middle" font-family='"Liberation Sans", sans-serif' font-weight="bold" font-size="12.2" fill="#0b0b0b">Lights</text>
<text x="811.5" y="32.8" font-family='"Liberation Sans", sans-serif' font-size="12.5" fill="#0b0b0b">Lights</text>
<text x="937.3" y="48.8" text-anchor="middle" font-family='"Liberation Sans", sans-serif' font-weight="bold" font-size="12.2" fill="#0b0b0b">GUI</text>
<text x="811.5" y="64.8" font-family='"Liberation Sans", sans-serif' font-size="12.5" fill="#0b0b0b">GUI</text>
<text x="937.3" y="80.8" text-anchor="middle" font-family='"Liberation Sans", sans-serif' font-weight="bold" font-size="12.2" fill="#0b0b0b">World</text>
<text x="811.5" y="96.8" font-family='"Liberation Sans", sans-serif' font-size="12.5" fill="#0b0b0b">World</text>
<text x="865.2" y="95.7" font-family='"Liberation Sans", sans-serif' font-style="italic" font-size="8.5" fill="#2e2e2e" stroke="#2e2e2e" stroke-width="0.3">World</text>
<text x="937.3" y="112.8" text-anchor="middle" font-family='"Liberation Sans", sans-serif' font-weight="bold" font-size="12.2" fill="#0b0b0b">Dynamics</text>
<text x="818.45" y="128.8" font-family='"Liberation Sans", sans-serif' font-size="12.5" fill="#0b0b0b">Dynamics</text>
<text x="892.6" y="127.7" font-family='"Liberation Sans", sans-serif' font-style="italic" font-size="8.5" fill="#2e2e2e" stroke="#2e2e2e" stroke-width="0.3">Dynamics</text>
<text x="811.5" y="144.8" font-family='"Liberation Sans", sans-serif' font-size="12.5" fill="#878787">Ross508b</text>
<text x="811.5" y="160.8" font-family='"Liberation Sans", sans-serif' font-size="12.5" fill="#0b0b0b">Blocker</text>
<text x="811.5" y="176.8" font-family='"Liberation Sans", sans-serif' font-size="12.5" fill="#0b0b0b">Blocker</text>
<text x="811.5" y="192.8" font-family='"Liberation Sans", sans-serif' font-size="12.5" fill="#ffffff">CircleMeasure.40</text>
<text x="825.5" y="208.8" font-family='"Liberation Sans", sans-serif' font-size="12.5" fill="#0b0b0b">40m</text>
<text x="839.5" y="224.8" font-family='"Liberation Sans", sans-serif' font-size="12.5" fill="#0b0b0b">Sprite Mask</text>
<text x="825.5" y="240.8" font-family='"Liberation Sans", sans-serif' font-size="12.5" fill="#0b0b0b">40m</text>
<text x="839.5" y="256.8" font-family='"Liberation Sans", sans-serif' font-size="12.5" fill="#0b0b0b">Sprite Mask</text>
<text x="811.5" y="272.8" font-family='"Liberation Sans", sans-serif' font-size="12.5" fill="#0b0b0b">CircleMeasure.20</text>
<text x="825.5" y="288.8" font-family='"Liberation Sans", sans-serif' font-size="12.5" fill="#0b0b0b">20m</text>
<text x="839.5" y="304.8" font-family='"Liberation Sans", sans-serif' font-size="12.5" fill="#0b0b0b">Sprite Mask</text>
<text x="825.5" y="320.8" font-family='"Liberation Sans", sans-serif' font-size="12.5" fill="#0b0b0b">20m</text>
<text x="839.5" y="336.8" font-family='"Liberation Sans", sans-serif' font-size="12.5" fill="#0b0b0b">Sprite Mask</text>
<text x="811.5" y="352.8" font-family='"Liberation Sans", sans-serif' font-size="12.5" fill="#0b0b0b">CircleMeasure.10</text>
<text x="825.5" y="368.8" font-family='"Liberation Sans", sans-serif' font-size="12.5" fill="#0b0b0b">10m</text>
<text x="839.5" y="384.8" font-family='"Liberation Sans", sans-serif' font-size="12.5" fill="#0b0b0b">Sprite Mask</text>
<text x="825.5" y="400.8" font-family='"Liberation Sans", sans-serif' font-size="12.5" fill="#0b0b0b">10m</text>
<text x="839.5" y="416.8" font-family='"Liberation Sans", sans-serif' font-size="12.5" fill="#0b0b0b">Sprite Mask</text></g>
</svg>
</body></html>
